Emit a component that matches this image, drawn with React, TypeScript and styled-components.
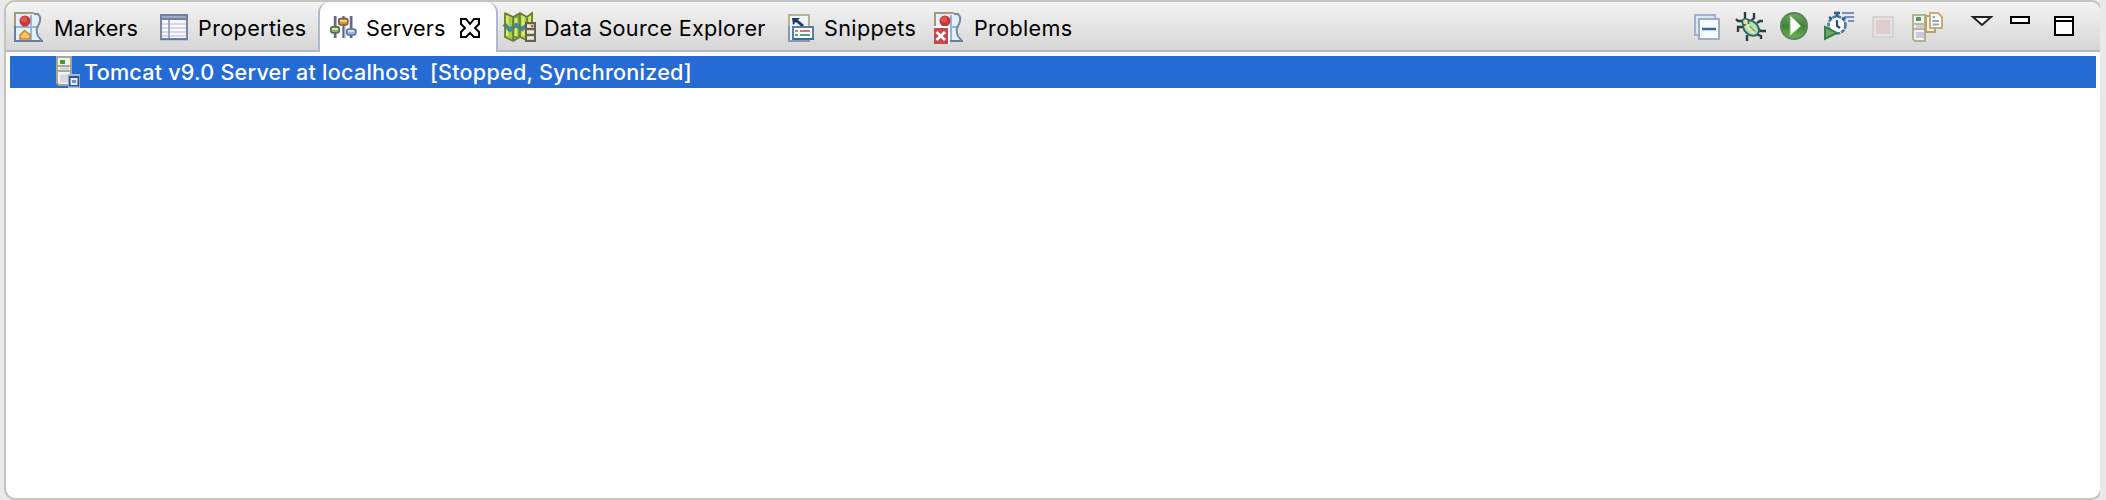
import React from "react";
import styled, { createGlobalStyle } from "styled-components";

const GlobalStyle = createGlobalStyle`
  * { box-sizing: border-box; }
  body { margin: 0; background: #e9e9e9; overflow: hidden; }
`;

const Frame = styled.div`
  width: 2106px;
  height: 500px;
  padding: 0 6px 0 4px;
  background: #e9e9e9;
  overflow: hidden;
  font-family: Inter, "Liberation Sans", sans-serif;
`;

const Clip = styled.div`
  width: 2096px;
  height: 500px;
  overflow: hidden;
`;

const Panel = styled.section`
  width: 2098px;
  height: 500px;
  border: 2px solid #c3c3bf;
  border-radius: 11px;
  background: #fff;
  overflow: hidden;
`;

const TabBar = styled.header`
  display: flex;
  height: 50px;
  background: linear-gradient(#f3f3f3, #d5d5d5);
`;

const Tab = styled.div<{ $width: number; $inset: number; $active?: boolean }>`
  display: flex;
  flex: none;
  align-items: flex-start;
  width: ${(p) => p.$width}px;
  height: 50px;
  padding: 10px 0 0 ${(p) => p.$inset}px;
  background: ${(p) => (p.$active ? "#fff" : "transparent")};
  border: 0 solid #b4b9ca;
  border-width: ${(p) => (p.$active ? "0 2px" : "0 0 2px")};
  border-radius: ${(p) => (p.$active ? "11px 11px 0 0" : "0")};
`;

const Label = styled.span<{ $gap: number; $spacing: number }>`
  margin-left: ${(p) => p.$gap}px;
  font-size: 21.6px;
  line-height: 32px;
  letter-spacing: ${(p) => p.$spacing}px;
  white-space: pre;
  color: #000;
`;

const Icon = styled.svg`
  display: block;
  flex: none;
  width: 32px;
  height: 32px;
  overflow: visible;
`;

const CloseIcon = styled(Icon)`
  width: 20px;
  height: 20px;
  margin: 6px 16px 0 auto;
`;

const Tools = styled.div`
  display: flex;
  flex: 1;
  align-items: flex-start;
  gap: 11px;
  height: 50px;
  padding: 10px 0 0 2px;
  border-bottom: 2px solid #b4b9ca;
`;

const Rows = styled.div`
  padding: 4px 4px 0 4px;
`;

const ServerRow = styled.div`
  display: flex;
  height: 32px;
  padding-left: 46px;
  background: #266bd3;
`;

const RowLabel = styled(Label)`
  color: #fff;
  font-weight: 500;
`;

const BookShape = () => (
  <>
    <path d="M3 1H27Q31 5 29 12Q25 18 27 23L31 29H3Z" fill="#e4f1fa" />
    <path d="M4 15H27M19 3V28" stroke="#91b6d5" strokeWidth="2" fill="none" />
    <path d="M22 2H26Q30 6 27 12Q23 18 26 24L30 29" stroke="#75869f" strokeWidth="2" fill="none" />
    <path d="M3 30V1H22" stroke="#a49b73" strokeWidth="2" fill="none" />
    <path d="M3 14V29H31" stroke="#677f9f" strokeWidth="2" fill="none" />
    <circle cx="13" cy="9" r="5.5" fill="#c8373a" />
    <circle cx="12" cy="7.5" r="3" fill="#e25350" />
  </>
);

const MarkersIcon = () => (
  <Icon viewBox="0 0 32 32">
    <BookShape />
    <path d="M8 27V23L12.5 18.5L18 23V27Z" fill="#fbc55f" stroke="#cb8432" strokeWidth="1.6" />
  </Icon>
);

const PropertiesIcon = () => (
  <Icon viewBox="0 0 32 32">
    <rect x="3" y="3" width="26" height="24" fill="#f9f9fd" stroke="#7786a2" strokeWidth="2" />
    <rect x="2" y="2" width="28" height="6" fill="#70809f" />
    <path d="M4 5H28" stroke="#9daac0" strokeWidth="2" />
    <path d="M4 12H28M4 16H28M4 20H28M4 24H28" stroke="#c9cde0" strokeWidth="1.6" />
    <path d="M11 8V26" stroke="#9da9c2" strokeWidth="2" />
    <path d="M2 27.5H30" stroke="#60779a" strokeWidth="1.5" />
  </Icon>
);

const ServersIcon = () => (
  <Icon viewBox="0 0 32 32">
    <path d="M7 4V26M15.5 4V26M23 4V26" stroke="#626a8c" strokeWidth="2.4" />
    <path d="M8.5 4V26M17 4V26M24.5 4V26" stroke="#a9b0cc" strokeWidth="1" />
    <rect x="2.8" y="14.8" width="8.5" height="6" rx="2" fill="#8dae68" stroke="#506c4e" strokeWidth="1.6" />
    <path d="M4 17H10" stroke="#d6e5aa" strokeWidth="2" />
    <rect x="10.8" y="6.5" width="9" height="6.5" rx="2" fill="#cb9541" stroke="#805e35" strokeWidth="1.6" />
    <path d="M12 9H19" stroke="#efcb83" strokeWidth="2" />
    <rect x="18.8" y="17" width="9" height="6" rx="2" fill="#9db6d6" stroke="#567399" strokeWidth="1.6" />
    <path d="M20 19H26" stroke="#d3e1f0" strokeWidth="2" />
  </Icon>
);

const MapIcon = () => (
  <Icon viewBox="0 0 32 32">
    <path d="M2 0L11 5L18 1L25 5L31 0V26L25 29L18 25L11 29L2 25Z" fill="#a9cd49" />
    <path d="M11 5L18 1V25L11 29Z" fill="#78a344" />
    <path d="M5 4V24M14 6V24M21 4V24M28 4V16" stroke="#d4ee62" strokeWidth="3" />
    <path d="M2 12L8 18L14 13L20 17L25 13" stroke="#3f8a9b" strokeWidth="4" fill="none" />
    <path d="M3 1V25L11 29L18 25L24 28M3 1L11 5L18 1L25 5L30 1V10M11 5V28M18 1V25M25 5V10" fill="none" stroke="#6d7c37" strokeWidth="1.7" />
    <rect x="23" y="10" width="11" height="20" fill="#67634a" />
    <path d="M25 14H32M25 20H32M25 26H32" stroke="#eceadf" strokeWidth="3.5" />
    <path d="M29 14H31.5" stroke="#d5453d" strokeWidth="2" />
  </Icon>
);

const SnippetsIcon = () => (
  <Icon viewBox="0 0 32 32">
    <rect x="3" y="3" width="21" height="26" fill="#eef5fc" />
    <path d="M3 16V3H23V14" fill="none" stroke="#b9b38c" strokeWidth="2" />
    <path d="M3 14V29H24" fill="none" stroke="#8998b2" strokeWidth="2" />
    <path d="M6 6H14L12 8L18 13L16 15L10 10L7 13Z" fill="#25375d" />
    <rect x="7" y="15" width="20" height="12" fill="#fff" stroke="#557ead" strokeWidth="2" />
    <path d="M7 27H28" stroke="#376b9f" strokeWidth="2" />
    <path d="M9 19H12M14 19H24" stroke="#db7272" strokeWidth="2" />
    <path d="M9 23H12M14 23H24" stroke="#4e9e80" strokeWidth="2" />
  </Icon>
);

const ProblemsIcon = () => (
  <Icon viewBox="0 0 32 32">
    <BookShape />
    <rect x="2" y="14" width="16" height="18" fill="#fff" />
    <rect x="2" y="16" width="14" height="16" fill="#c8464c" />
    <path d="M4.500 20L13 28M13 20L4.500 28" stroke="#fff" strokeWidth="2.8" fill="none" />
  </Icon>
);

const CollapseIcon = () => (
  <Icon viewBox="0 0 32 32">
    <rect x="3" y="3" width="20" height="20" fill="#d4e9f7" stroke="#9fb3cc" strokeWidth="2" />
    <rect x="7" y="7" width="20" height="20" fill="#f7fcff" stroke="#a1abc2" strokeWidth="2" />
    <path d="M10 17H24" stroke="#34669c" strokeWidth="2.4" />
  </Icon>
);

const DebugIcon = () => (
  <Icon viewBox="0 0 32 32">
    <path
      d="M10 0V6M1 7L3 9H8M3 20V15H8M12 29V23M19 1V6L16 9M22 11L25 9H28M23 17L26 19H31M21 22L26 24V27"
      stroke="#2b4139"
      strokeWidth="2.4"
      fill="none"
    />
    <ellipse cx="16" cy="16" rx="9" ry="6.6" transform="rotate(42 16 16)" fill="#bfdfa8" stroke="#2d6674" strokeWidth="2" />
    <circle cx="10.5" cy="10" r="3.2" fill="#d2e9a4" stroke="#386356" strokeWidth="1.5" />
    <path d="M11.5 12.5L19 20" stroke="#e0efbd" strokeWidth="3.5" />
    <path d="M14.5 14L20 19.5" stroke="#74a668" strokeWidth="1.5" />
  </Icon>
);

const RunIcon = () => (
  <Icon viewBox="0 0 32 32">
    <defs>
      <linearGradient id="run" x2="0" y2="1">
        <stop stopColor="#77a46b" />
        <stop offset=".5" stopColor="#3e8339" />
        <stop offset="1" stopColor="#6fb653" />
      </linearGradient>
    </defs>
    <circle cx="16" cy="14" r="13" fill="url(#run)" stroke="#56885a" strokeWidth="2" />
    <path d="M12 3V24L23 14Z" fill="#fff" stroke="#80bd5b" strokeWidth="1" />
  </Icon>
);

const ProfileIcon = () => (
  <Icon viewBox="0 0 32 32">
    <g transform="translate(1 0)">
      <circle cx="15" cy="13" r="8.5" fill="#fff" stroke="#477ba9" strokeWidth="2.6" strokeDasharray="4 1" />
      <path d="M12 1H18M15 1V5M7 5L10 7M21 7L24 5" stroke="#315c8b" strokeWidth="2.5" />
      <path d="M15 8V14L18 16" stroke="#244e7f" strokeWidth="2.2" fill="none" />
      <path d="M20 1H32M23 5H32M26 9H32" stroke="#7593bf" strokeWidth="1.8" />
      <path d="M3 15L15 21L3 27Z" fill="#67a967" stroke="#3e7e48" strokeWidth="2" />
    </g>
  </Icon>
);

const StopIcon = () => (
  <Icon viewBox="0 0 32 32">
    <rect x="9" y="5" width="20" height="20" fill="#e5e2e2" stroke="#d5d4d4" strokeWidth="2" />
    <rect x="12" y="8" width="14" height="14" fill="#dfcdce" />
  </Icon>
);

const PublishIcon = () => (
  <Icon viewBox="0 0 32 32">
    <path d="M6 3H18V29H8L6 27Z" fill="#f2f2eb" stroke="#b3b098" strokeWidth="2" />
    <path d="M6 12H18M6 17H18" stroke="#b6b49d" strokeWidth="2" />
    <rect x="9" y="5" width="5" height="4" fill="#539b52" />
    <path d="M9 14.5H17" stroke="#c6c9e4" strokeWidth="2.5" />
    <rect x="9" y="20" width="8" height="6" fill="#c9cae2" />
    <path d="M19 4H28V20H19Z" fill="#f7f3e4" stroke="#b8a26c" strokeWidth="2" />
    <path d="M23 1H31L35 5V16H23Z" fill="#fff" stroke="#c9ad70" strokeWidth="2" />
    <path d="M25.5 5H28M25.5 9H32M25.5 12.5H32" stroke="#8fa9cb" strokeWidth="1.8" />
  </Icon>
);

const ViewControl = styled(Icon)<{ $w: number; $h: number; $left: number }>`
  width: ${(p) => p.$w}px;
  height: ${(p) => p.$h}px;
  margin: 4px 0 0 ${(p) => p.$left}px;
`;

const RowIcon = () => (
  <Icon viewBox="0 0 32 32">
    <path d="M1 1H15V29H3L1 27Z" fill="#f1f1ed" stroke="#a7a68f" strokeWidth="2" />
    <path d="M1 10H15M1 15H15" stroke="#aaa994" strokeWidth="2" />
    <rect x="4" y="4" width="5" height="4" fill="#3c9b40" />
    <path d="M4 12.5H13" stroke="#c3c9e6" strokeWidth="2" />
    <path d="M4 22.5H12" stroke="#d3d6ec" strokeWidth="8" />
    <rect x="12" y="18" width="12" height="14" fill="#e9eff7" />
    <path d="M12 19H24" stroke="#a9bad2" strokeWidth="2" />
    <rect x="13.5" y="21" width="9" height="9" fill="#e3ecf7" stroke="#2d5390" strokeWidth="2" />
    <path d="M16 25.5H20" stroke="#6e93c6" strokeWidth="3" />
    <path d="M12 31H24" stroke="#8ba7cf" strokeWidth="1.5" />
  </Icon>
);

export default function App() {
  return (
    <>
      <GlobalStyle />
      <Frame>
        <Clip>
          <Panel>
            <TabBar>
              <Tab $width={150} $inset={6}>
                <MarkersIcon />
                <Label $gap={10} $spacing={0.05}>Markers</Label>
              </Tab>
              <Tab $width={162} $inset={2}>
                <PropertiesIcon />
                <Label $gap={8} $spacing={0.35}>Properties</Label>
              </Tab>
              <Tab $width={180} $inset={8} $active>
                <ServersIcon />
                <Label $gap={6} $spacing={0.1}>Servers</Label>
                <CloseIcon viewBox="0 0 20 20">
                  <path d="M1 1H6L10 6L14 1H19V6L15 10L19 14V19H14L10 15L6 19H1V14L5 10L1 6Z" fill="#fff" stroke="#000" strokeWidth="2" />
                </CloseIcon>
              </Tab>
              <Tab $width={286} $inset={4}>
                <MapIcon />
                <Label $gap={10} $spacing={0.28}>Data Source Explorer</Label>
              </Tab>
              <Tab $width={146} $inset={2}>
                <SnippetsIcon />
                <Label $gap={6} $spacing={0.38}>Snippets</Label>
              </Tab>
              <Tab $width={760} $inset={2}>
                <ProblemsIcon />
                <Label $gap={10} $spacing={0.33}>Problems</Label>
              </Tab>
              <Tools>
                <CollapseIcon />
                <DebugIcon />
                <RunIcon />
                <ProfileIcon />
                <StopIcon />
                <PublishIcon />
                <ViewControl viewBox="0 0 20 10" $w={20} $h={10} $left={22}>
                  <path d="M1 1H19L10 9Z" fill="#fff" stroke="#222" strokeWidth="2" />
                </ViewControl>
                <ViewControl viewBox="0 0 20 8" $w={20} $h={8} $left={7}>
                  <rect x="1" y="1" width="18" height="6" fill="#fff" stroke="#000" strokeWidth="2" />
                </ViewControl>
                <ViewControl viewBox="0 0 20 20" $w={20} $h={20} $left={13}>
                  <path d="M1 1H19V19H1ZM1 5H19" fill="#fff" stroke="#000" strokeWidth="2" />
                </ViewControl>
              </Tools>
            </TabBar>
            <Rows>
              <ServerRow>
                <RowIcon />
                <RowLabel $gap={-4} $spacing={0.22}>{"Tomcat v9.0 Server at localhost  [Stopped, Synchronized]"}</RowLabel>
              </ServerRow>
            </Rows>
          </Panel>
        </Clip>
      </Frame>
    </>
  );
}
